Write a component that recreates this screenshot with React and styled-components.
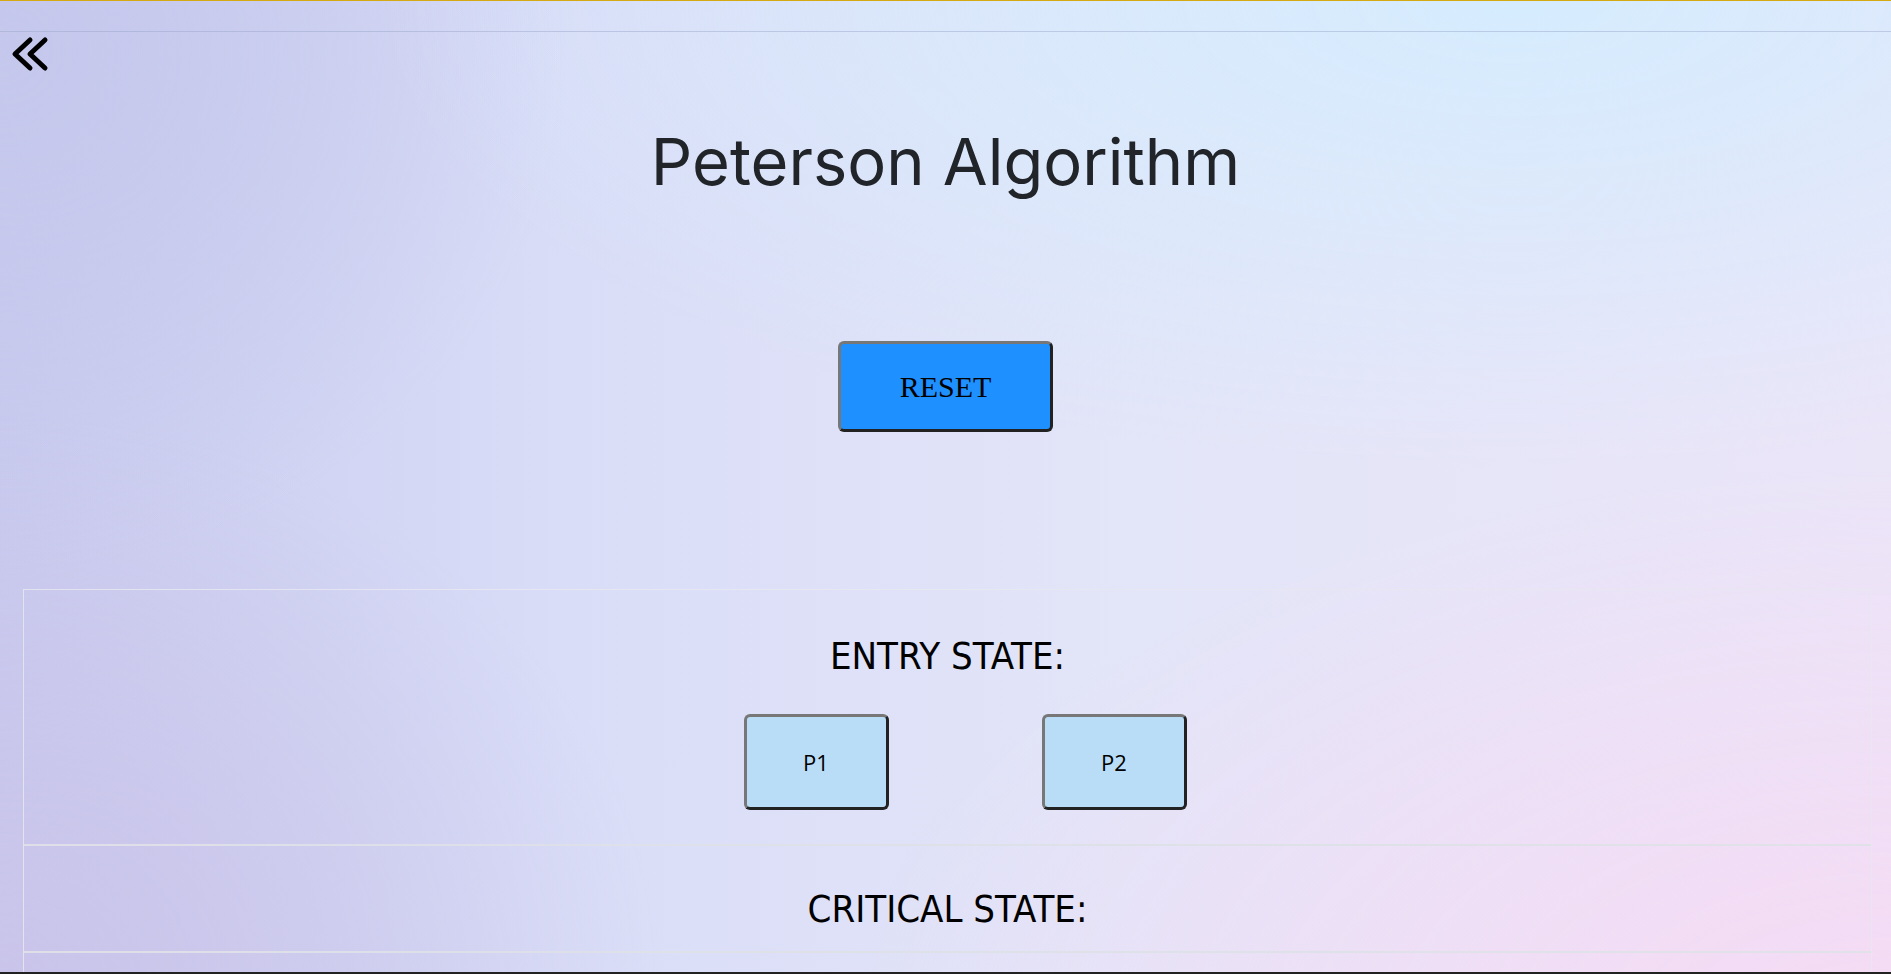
import React from 'react';
import styled, { createGlobalStyle } from 'styled-components';

const GlobalStyle = createGlobalStyle`
  html, body {
    margin: 0;
    padding: 0;
    overflow: hidden;
  }

  body {
    font-family: 'Open Sans', 'Noto Sans', sans-serif;
    background-color: #e2e3f7;
  }
`;

export const Page__styled = styled.div`
  min-height: 100vh;
  display: flex;
  flex-direction: column;
  background:
    radial-gradient(ellipse 60% 45% at 80% 0%, rgba(213, 236, 254, 1), rgba(213, 236, 254, 0) 100%),
    radial-gradient(ellipse 55% 55% at 100% 100%, rgba(245, 218, 244, 1), rgba(245, 218, 244, 0) 100%),
    radial-gradient(ellipse 35% 55% at 0% 95%, rgba(202, 196, 234, 1), rgba(202, 196, 234, 0) 100%),
    radial-gradient(ellipse 30% 50% at 0% 5%, rgba(197, 200, 236, 1), rgba(197, 200, 236, 0) 100%),
    linear-gradient(90deg, #c8caee 0%, #d9ddf7 30%, #e3e5f8 60%, #ebe5f8 100%);
`;

export const TopBar__styled = styled.div`
  height: 30px;
  border-top: 1px solid #d4a912;
  border-bottom: 1px solid rgba(150, 165, 200, 0.45);
  flex-shrink: 0;
`;

export const BackLink__styled = styled.a`
  margin: 4px 0 0 10px;
  display: inline-flex;
  width: 40px;
  height: 36px;
  color: #000000;
  cursor: pointer;
  align-self: flex-start;
`;

export const Title__styled = styled.h1`
  margin: 51px 0 0;
  font-family: 'Inter', 'Lato', sans-serif;
  font-size: 65px;
  font-weight: 400;
  line-height: 1.2;
  color: #212529;
  text-align: center;
`;

export const ResetRow__styled = styled.div`
  margin-top: 140px;
  display: flex;
  justify-content: center;
`;

export const ResetButton__styled = styled.button`
  width: 215px;
  height: 91px;
  font-family: 'Liberation Serif', 'Times New Roman', serif;
  font-size: 30px;
  color: #000000;
  background-color: #1e90ff;
  border: 3px solid;
  border-color: #777777 #222222 #222222 #777777;
  border-radius: 6px;
  cursor: pointer;
`;

export const StateTable__styled = styled.div`
  margin: 157px 19px 0 23px;
  border: 1px solid rgba(232, 232, 240, 0.85);
  border-bottom: none;
`;

export const StateRow__styled = styled.div`
  padding: ${props => props.$pad};
  min-height: 20px;
  display: flex;
  flex-direction: column;
  align-items: center;
  border-bottom: 2px solid rgba(222, 224, 232, 0.95);
`;

export const StateLabel__styled = styled.h2`
  margin: 0;
  font-family: 'DejaVu Sans Condensed', 'DejaVu Sans', sans-serif;
  font-stretch: condensed;
  font-size: 38px;
  font-weight: 400;
  line-height: 1.2;
  color: #000000;
  text-transform: uppercase;
`;

export const ProcessList__styled = styled.div`
  margin-top: 34px;
  padding-left: 35px;
  display: flex;
  justify-content: center;
  gap: 153px;
`;

export const ProcessBox__styled = styled.div`
  width: 145px;
  height: 96px;
  box-sizing: border-box;
  display: flex;
  align-items: center;
  justify-content: center;
  font-family: 'Open Sans', 'Noto Sans', sans-serif;
  font-size: 22px;
  color: #000000;
  background-color: #b9ddf6;
  border: 3px solid;
  border-color: #777777 #222222 #222222 #777777;
  border-radius: 6px;
`;

export const BottomEdge__styled = styled.div`
  position: fixed;
  left: 0;
  right: 0;
  bottom: 0;
  height: 2px;
  background-color: #222222;
`;

const ChevronsLeft = () => (
  <svg width="40" height="36" viewBox="0 0 40 36" fill="none" stroke="currentColor"
    strokeWidth="5" strokeLinecap="round" strokeLinejoin="round">
    <polyline points="20,4 5,18 20,32" />
    <polyline points="35,4 20,18 35,32" />
  </svg>
);

const processes = ['P1', 'P2'];

export default function App() {
  return (
    <>
      <GlobalStyle />
      <Page__styled>
        <TopBar__styled />
        <BackLink__styled aria-label="back">
          <ChevronsLeft />
        </BackLink__styled>
        <Title__styled>Peterson Algorithm</Title__styled>
        <ResetRow__styled>
          <ResetButton__styled>RESET</ResetButton__styled>
        </ResetRow__styled>
        <StateTable__styled>
          <StateRow__styled $pad="44px 0 34px">
            <StateLabel__styled>Entry State:</StateLabel__styled>
            <ProcessList__styled>
              {processes.map(p => (
                <ProcessBox__styled key={p}>{p}</ProcessBox__styled>
              ))}
            </ProcessList__styled>
          </StateRow__styled>
          <StateRow__styled $pad="41px 0 19px">
            <StateLabel__styled>Critical State:</StateLabel__styled>
          </StateRow__styled>
          <StateRow__styled $pad="44px 0 18px" />
        </StateTable__styled>
      </Page__styled>
      <BottomEdge__styled />
    </>
  );
}
